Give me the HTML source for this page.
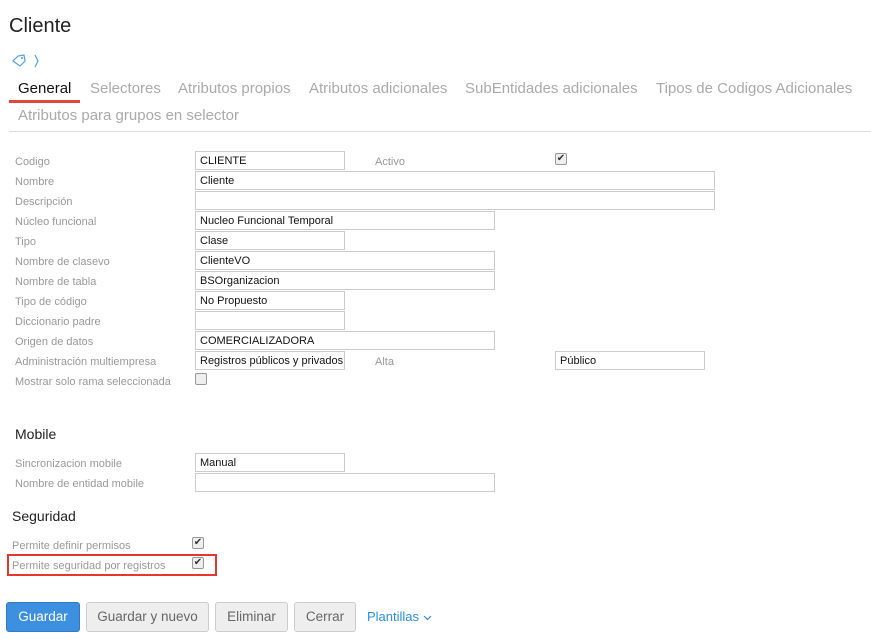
<!DOCTYPE html>
<html><head><meta charset="utf-8"><style>
*{box-sizing:border-box;margin:0;padding:0}
body{width:871px;height:640px;background:#fff;font-family:"Liberation Sans",sans-serif;position:relative;overflow:hidden}
.a{position:absolute}
.lbl{position:absolute;font-size:11px;color:#999;left:15px;margin-top:2px}
.in{position:absolute;height:19px;border:1px solid #ccc;font-size:11px;color:#111;padding:3px 0 0 4px;white-space:nowrap;overflow:hidden;background:#fff}
.tab{position:absolute;top:80px;font-size:15px;color:#aaa}
.cb{position:absolute;width:12px;height:12px;border:1px solid #999;border-radius:2px;background:#eee;font-size:10px;line-height:10px;text-align:center;color:#333}
.btn{position:absolute;top:602px;height:30px;border:1px solid #ccc;border-radius:3px;background:#eee;color:#666;font-size:13.5px;text-align:center;line-height:28px}
</style></head><body>
<div class="a" style="left:9px;top:15px;font-size:20px;color:#222">Cliente</div>
<svg class="a" style="left:12px;top:54px" width="30" height="14" viewBox="0 0 30 14"><path d="M1 7 L6 2 L12 1 L13 7 L8 12 Z" fill="none" stroke="#4aa3f0" stroke-width="1.2"/><circle cx="10" cy="4" r="1" fill="#4aa3f0"/><path d="M23 1 L26 7 L23 13" fill="none" stroke="#4aa3f0" stroke-width="1.2"/></svg>
<div class="tab" style="left:18px;color:#111">General</div>
<div class="a" style="left:9px;top:100px;width:71px;height:3px;background:#e0483e"></div>
<div class="tab" style="left:90px">Selectores</div>
<div class="tab" style="left:178px">Atributos propios</div>
<div class="tab" style="left:309px">Atributos adicionales</div>
<div class="tab" style="left:465px">SubEntidades adicionales</div>
<div class="tab" style="left:656px">Tipos de Codigos Adicionales</div>
<div class="tab" style="left:18px;top:107px">Atributos para grupos en selector</div>
<div class="a" style="left:9px;top:131px;width:862px;height:1px;background:#ddd"></div>

<div class="lbl" style="top:154px">Codigo</div><div class="in" style="left:195px;top:151px;width:150px">CLIENTE</div>
<div class="lbl" style="left:375px;top:154px">Activo</div><div class="cb" style="left:555px;top:153px">✔</div>
<div class="lbl" style="top:174px">Nombre</div><div class="in" style="left:195px;top:171px;width:520px">Cliente</div>
<div class="lbl" style="top:194px">Descripción</div><div class="in" style="left:195px;top:191px;width:520px"></div>
<div class="lbl" style="top:214px">Núcleo funcional</div><div class="in" style="left:195px;top:211px;width:300px">Nucleo Funcional Temporal</div>
<div class="lbl" style="top:234px">Tipo</div><div class="in" style="left:195px;top:231px;width:150px">Clase</div>
<div class="lbl" style="top:254px">Nombre de clasevo</div><div class="in" style="left:195px;top:251px;width:300px">ClienteVO</div>
<div class="lbl" style="top:274px">Nombre de tabla</div><div class="in" style="left:195px;top:271px;width:300px">BSOrganizacion</div>
<div class="lbl" style="top:294px">Tipo de código</div><div class="in" style="left:195px;top:291px;width:150px">No Propuesto</div>
<div class="lbl" style="top:314px">Diccionario padre</div><div class="in" style="left:195px;top:311px;width:150px"></div>
<div class="lbl" style="top:334px">Origen de datos</div><div class="in" style="left:195px;top:331px;width:300px">COMERCIALIZADORA</div>
<div class="lbl" style="top:354px">Administración multiempresa</div><div class="in" style="left:195px;top:351px;width:150px">Registros públicos y privados</div>
<div class="lbl" style="left:375px;top:354px">Alta</div><div class="in" style="left:555px;top:351px;width:150px">Público</div>
<div class="lbl" style="top:374px">Mostrar solo rama seleccionada</div><div class="cb" style="left:195px;top:373px"></div>

<div class="a" style="left:15px;top:426px;font-size:14px;color:#222">Mobile</div>
<div class="lbl" style="top:456px">Sincronizacion mobile</div><div class="in" style="left:195px;top:453px;width:150px">Manual</div>
<div class="lbl" style="top:476px">Nombre de entidad mobile</div><div class="in" style="left:195px;top:473px;width:300px"></div>

<div class="a" style="left:12px;top:508px;font-size:14px;color:#222">Seguridad</div>
<div class="lbl" style="left:12px;top:538px">Permite definir permisos</div><div class="cb" style="left:192px;top:537px">✔</div>
<div class="a" style="left:7px;top:554px;width:210px;height:22px;border:2px solid #e8362c"></div>
<div class="lbl" style="left:12px;top:558px">Permite seguridad por registros</div><div class="cb" style="left:192px;top:557px">✔</div>

<div class="btn" style="left:6px;width:74px;background:#3d8fe0;border-color:#2f7bc8;color:#fff">Guardar</div>
<div class="btn" style="left:86px;width:123px">Guardar y nuevo</div>
<div class="btn" style="left:215px;width:73px">Eliminar</div>
<div class="btn" style="left:294px;width:62px">Cerrar</div>
<div class="a" style="left:367px;top:609px;font-size:13px;color:#2a8ee6">Plantillas <svg width="9" height="6" viewBox="0 0 9 6"><path d="M1 1 L4.5 4.5 L8 1" fill="none" stroke="#2a8ee6" stroke-width="1.2"/></svg></div>
</body></html>
